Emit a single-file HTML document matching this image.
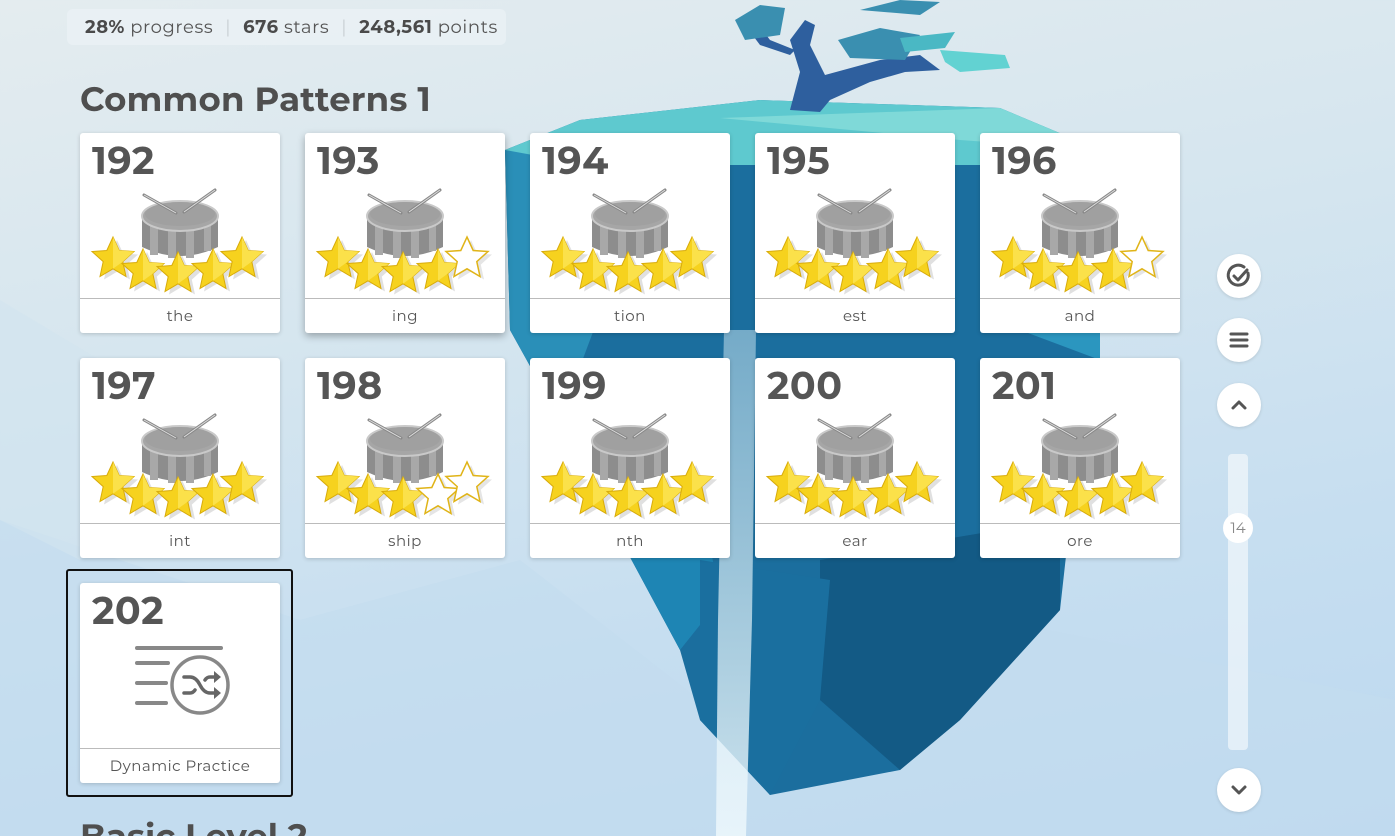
<!DOCTYPE html>
<html><head><meta charset="utf-8">
<style>
*{margin:0;padding:0;box-sizing:border-box}
html,body{width:1395px;height:836px;overflow:hidden}
body{position:relative;font-family:"Montserrat","Liberation Sans",sans-serif;background:linear-gradient(170deg,#e4ecef 0%,#d6e6ef 35%,#c6def0 70%,#bcd8ef 100%)}
.bg{position:absolute;left:0;top:0}
.stats{position:absolute;left:67px;top:9px;width:439px;height:36px;background:rgba(235,242,246,.75);border-radius:6px;font-size:18px;color:#555;line-height:36px;padding-left:18px;white-space:nowrap;letter-spacing:.6px}
.stats b{color:#4a4a4a}
.stats .sep{color:#c9d0d4;margin:0 12px}
h1{position:absolute;left:80px;top:78px;font-size:34px;font-weight:bold;color:#4f4f4f;letter-spacing:.2px}
h2{position:absolute;left:80px;top:816px;font-size:34px;font-weight:bold;color:#4f4f4f;line-height:40px}
.card{position:absolute;width:200px;height:200px;background:#fff;border-radius:3px;box-shadow:0 1px 4px rgba(0,0,0,.18)}
.card .n{position:absolute;left:12px;top:4px;font-size:38px;font-weight:bold;color:#555;letter-spacing:.5px}
.card .l{position:absolute;left:0;right:0;top:165px;border-top:1px solid #bbb;text-align:center;font-size:15px;color:#555;line-height:34px;letter-spacing:.5px}
.card svg{position:absolute;left:0;top:0}
.sel{position:absolute;left:66px;top:569px;width:227px;height:228px;border:2px solid #111;border-radius:3px}
.btn{position:absolute;left:1217px;width:44px;height:44px;border-radius:50%;background:#fff;box-shadow:0 1px 3px rgba(0,0,0,.12)}
.btn svg{position:absolute;left:0;top:0}
.track{position:absolute;left:1228px;top:454px;width:20px;height:296px;background:rgba(255,255,255,.55);border-radius:4px}
.knob{position:absolute;left:1223px;top:513px;width:30px;height:30px;border-radius:50%;background:#fff;text-align:center;line-height:30px;font-size:15px;color:#888}
</style></head><body>
<svg class="bg" width="1395" height="836">
<defs>
<linearGradient id="wf" x1="0" x2="0" y1="0" y2="1"><stop offset="0" stop-color="#cfe8f2" stop-opacity=".5"/><stop offset="1" stop-color="#eef8fc" stop-opacity=".85"/></linearGradient>
</defs>
<polygon points="0,520 300,620 520,560 700,700 1000,620 1395,700 1395,836 0,836" fill="#c3dcef" opacity=".6"/>
<polygon points="0,300 200,420 80,560 0,520" fill="#d2e4ef" opacity=".6"/>
<polygon points="505,150 580,120 760,100 1000,108 1100,150 1100,360 1070,520 1060,610 960,720 900,770 770,795 700,720 680,650 610,520 560,420 510,330" fill="#1b6e9e"/>
<polygon points="505,150 580,140 620,260 560,420 510,330" fill="#2a8fb8"/>
<polygon points="560,420 680,380 720,600 680,650 610,520" fill="#1e85b4"/>
<polygon points="820,560 1060,520 1060,610 960,720 900,770 820,700" fill="#135a85"/>
<polygon points="700,560 830,580 820,700 770,795 700,720" fill="#1a6f9f"/>
<polygon points="1000,140 1100,150 1100,360 1020,330" fill="#2b96bf"/>
<polygon points="505,150 580,120 760,100 1000,108 1100,150 980,165 720,165 560,160" fill="#5ec9cf"/>
<polygon points="720,118 1000,108 1100,150 960,140" fill="#7fd9d8"/>
<polygon points="724,330 756,330 752,620 746,836 716,836 718,620" fill="url(#wf)"/>
<g fill="#2e5f9e">
<polygon points="790,110 800,72 790,40 805,20 815,25 810,45 825,75 880,60 920,55 940,70 905,72 870,82 830,100 820,112"/>
<polygon points="790,55 760,45 745,25 755,20 770,40 795,50"/>
</g>
<g fill="#3a8fb0">
<polygon points="735,20 760,5 785,8 780,35 745,40"/>
<polygon points="838,40 880,28 920,35 905,60 850,58"/>
<polygon points="860,10 900,0 940,2 920,15"/>
</g>
<polygon points="940,50 1005,55 1010,68 960,72 945,62" fill="#62d2d2"/>
<polygon points="900,38 955,32 945,48 905,52" fill="#4ab8c4"/>
</svg>

<svg width="0" height="0" style="position:absolute">
<defs>
<g id="drum">
<path d="M62 84 L62 114 Q100 132 138 114 L138 84 Z" fill="#8d8d8d"/>
<path d="M70 88h8v34h-8zM88 90h8v35h-8zM106 90h8v35h-8zM124 88h7v30h-7z" fill="#a8a8a8"/>
<ellipse cx="100" cy="83" rx="38" ry="15" fill="#a6a6a6" stroke="#c9c9c9" stroke-width="2"/>
<ellipse cx="100" cy="81" rx="35" ry="12" fill="#a0a0a0"/>
<line x1="64" y1="62" x2="96" y2="80" stroke="#888" stroke-width="3" stroke-linecap="round"/>
<line x1="64" y1="62" x2="96" y2="80" stroke="#ddd" stroke-width="1"/>
<line x1="104" y1="79" x2="135" y2="57" stroke="#888" stroke-width="3" stroke-linecap="round"/>
<line x1="104" y1="79" x2="135" y2="57" stroke="#ddd" stroke-width="1"/>
</g>
<path id="st" d="M0,-21 L6.2,-7.5 L21,-6.5 L9.8,3.6 L13,18.5 L0,10.8 L-13,18.5 L-9.8,3.6 L-21,-6.5 L-6.2,-7.5Z"/>
<g id="sf"><use href="#st" transform="translate(4,3)" fill="#000" opacity=".12"/><use href="#st" fill="#f6d21e" stroke="#d8ab0a" stroke-width="1"/><path d="M0,-21 L6.2,-7.5 L21,-6.5 L9.8,3.6 L0,10.8Z" fill="#fbe14a"/></g>
<g id="se"><use href="#st" transform="translate(4,3)" fill="#000" opacity=".1"/><use href="#st" fill="#fff" stroke="#e0b418" stroke-width="1.5"/></g>
</defs></svg>

<div class="stats"><b>28%</b> progress<span class="sep">|</span><b>676</b> stars<span class="sep">|</span><b>248,561</b> points</div>
<h1>Common Patterns 1</h1>

<div class="card" style="left:80px;top:133px"><div class="n">192</div><svg width="200" height="165"><use href="#drum"/><use href="#sf" x="33" y="125"/><use href="#sf" x="63" y="137"/><use href="#sf" x="98" y="140"/><use href="#sf" x="133" y="137"/><use href="#sf" x="162" y="125"/></svg><div class="l">the</div></div>
<div class="card" style="left:305px;top:133px;box-shadow:0 3px 8px rgba(0,0,0,.3)"><div class="n">193</div><svg width="200" height="165"><use href="#drum"/><use href="#sf" x="33" y="125"/><use href="#sf" x="63" y="137"/><use href="#sf" x="98" y="140"/><use href="#sf" x="133" y="137"/><use href="#se" x="162" y="125"/></svg><div class="l">ing</div></div>
<div class="card" style="left:530px;top:133px"><div class="n">194</div><svg width="200" height="165"><use href="#drum"/><use href="#sf" x="33" y="125"/><use href="#sf" x="63" y="137"/><use href="#sf" x="98" y="140"/><use href="#sf" x="133" y="137"/><use href="#sf" x="162" y="125"/></svg><div class="l">tion</div></div>
<div class="card" style="left:755px;top:133px"><div class="n">195</div><svg width="200" height="165"><use href="#drum"/><use href="#sf" x="33" y="125"/><use href="#sf" x="63" y="137"/><use href="#sf" x="98" y="140"/><use href="#sf" x="133" y="137"/><use href="#sf" x="162" y="125"/></svg><div class="l">est</div></div>
<div class="card" style="left:980px;top:133px"><div class="n">196</div><svg width="200" height="165"><use href="#drum"/><use href="#sf" x="33" y="125"/><use href="#sf" x="63" y="137"/><use href="#sf" x="98" y="140"/><use href="#sf" x="133" y="137"/><use href="#se" x="162" y="125"/></svg><div class="l">and</div></div>

<div class="card" style="left:80px;top:358px"><div class="n">197</div><svg width="200" height="165"><use href="#drum"/><use href="#sf" x="33" y="125"/><use href="#sf" x="63" y="137"/><use href="#sf" x="98" y="140"/><use href="#sf" x="133" y="137"/><use href="#sf" x="162" y="125"/></svg><div class="l">int</div></div>
<div class="card" style="left:305px;top:358px"><div class="n">198</div><svg width="200" height="165"><use href="#drum"/><use href="#sf" x="33" y="125"/><use href="#sf" x="63" y="137"/><use href="#sf" x="98" y="140"/><use href="#se" x="133" y="137"/><use href="#se" x="162" y="125"/></svg><div class="l">ship</div></div>
<div class="card" style="left:530px;top:358px"><div class="n">199</div><svg width="200" height="165"><use href="#drum"/><use href="#sf" x="33" y="125"/><use href="#sf" x="63" y="137"/><use href="#sf" x="98" y="140"/><use href="#sf" x="133" y="137"/><use href="#sf" x="162" y="125"/></svg><div class="l">nth</div></div>
<div class="card" style="left:755px;top:358px"><div class="n">200</div><svg width="200" height="165"><use href="#drum"/><use href="#sf" x="33" y="125"/><use href="#sf" x="63" y="137"/><use href="#sf" x="98" y="140"/><use href="#sf" x="133" y="137"/><use href="#sf" x="162" y="125"/></svg><div class="l">ear</div></div>
<div class="card" style="left:980px;top:358px"><div class="n">201</div><svg width="200" height="165"><use href="#drum"/><use href="#sf" x="33" y="125"/><use href="#sf" x="63" y="137"/><use href="#sf" x="98" y="140"/><use href="#sf" x="133" y="137"/><use href="#sf" x="162" y="125"/></svg><div class="l">ore</div></div>

<div class="sel"></div>
<div class="card" style="left:80px;top:583px"><div class="n">202</div>
<svg width="200" height="165"><g stroke="#888" stroke-width="4" stroke-linecap="round" fill="none">
<line x1="57" y1="65" x2="141" y2="65"/><line x1="57" y1="80" x2="88" y2="80"/><line x1="57" y1="100" x2="86" y2="100"/><line x1="57" y1="120" x2="86" y2="120"/>
<circle cx="120" cy="102" r="28" stroke-width="3.5"/>
<path d="M104 94 h6 q6 0 10 8 q4 8 10 8 h6 M104 110 h6 q3 0 5 -3 M125 97 q2 -3 5 -3 h6" stroke="#666" stroke-width="3.5"/>
</g>
<path d="M134 88 l7 6 -7 6z M134 104 l7 6 -7 6z" fill="#666"/></svg>
<div class="l">Dynamic Practice</div></div>

<h2>Basic Level 2</h2>

<div class="btn" style="top:254px"><svg width="44" height="44"><path d="M31 19 A10 10 0 1 1 27 13" stroke="#555" stroke-width="3" fill="none" stroke-linecap="round"/><path d="M17 22 l4 4 l9 -10" stroke="#555" stroke-width="3" fill="none" stroke-linecap="round" stroke-linejoin="round"/></svg></div>
<div class="btn" style="top:318px"><svg width="44" height="44"><g stroke="#555" stroke-width="3" stroke-linecap="round"><line x1="14" y1="16" x2="30" y2="16"/><line x1="14" y1="22" x2="30" y2="22"/><line x1="14" y1="28" x2="30" y2="28"/></g></svg></div>
<div class="btn" style="top:383px"><svg width="44" height="44"><path d="M16 25 l6 -6 l6 6" stroke="#555" stroke-width="3" fill="none" stroke-linecap="round" stroke-linejoin="round"/></svg></div>
<div class="track"></div>
<div class="knob">14</div>
<div class="btn" style="top:768px"><svg width="44" height="44"><path d="M16 19 l6 6 l6 -6" stroke="#555" stroke-width="3" fill="none" stroke-linecap="round" stroke-linejoin="round"/></svg></div>
</body></html>
